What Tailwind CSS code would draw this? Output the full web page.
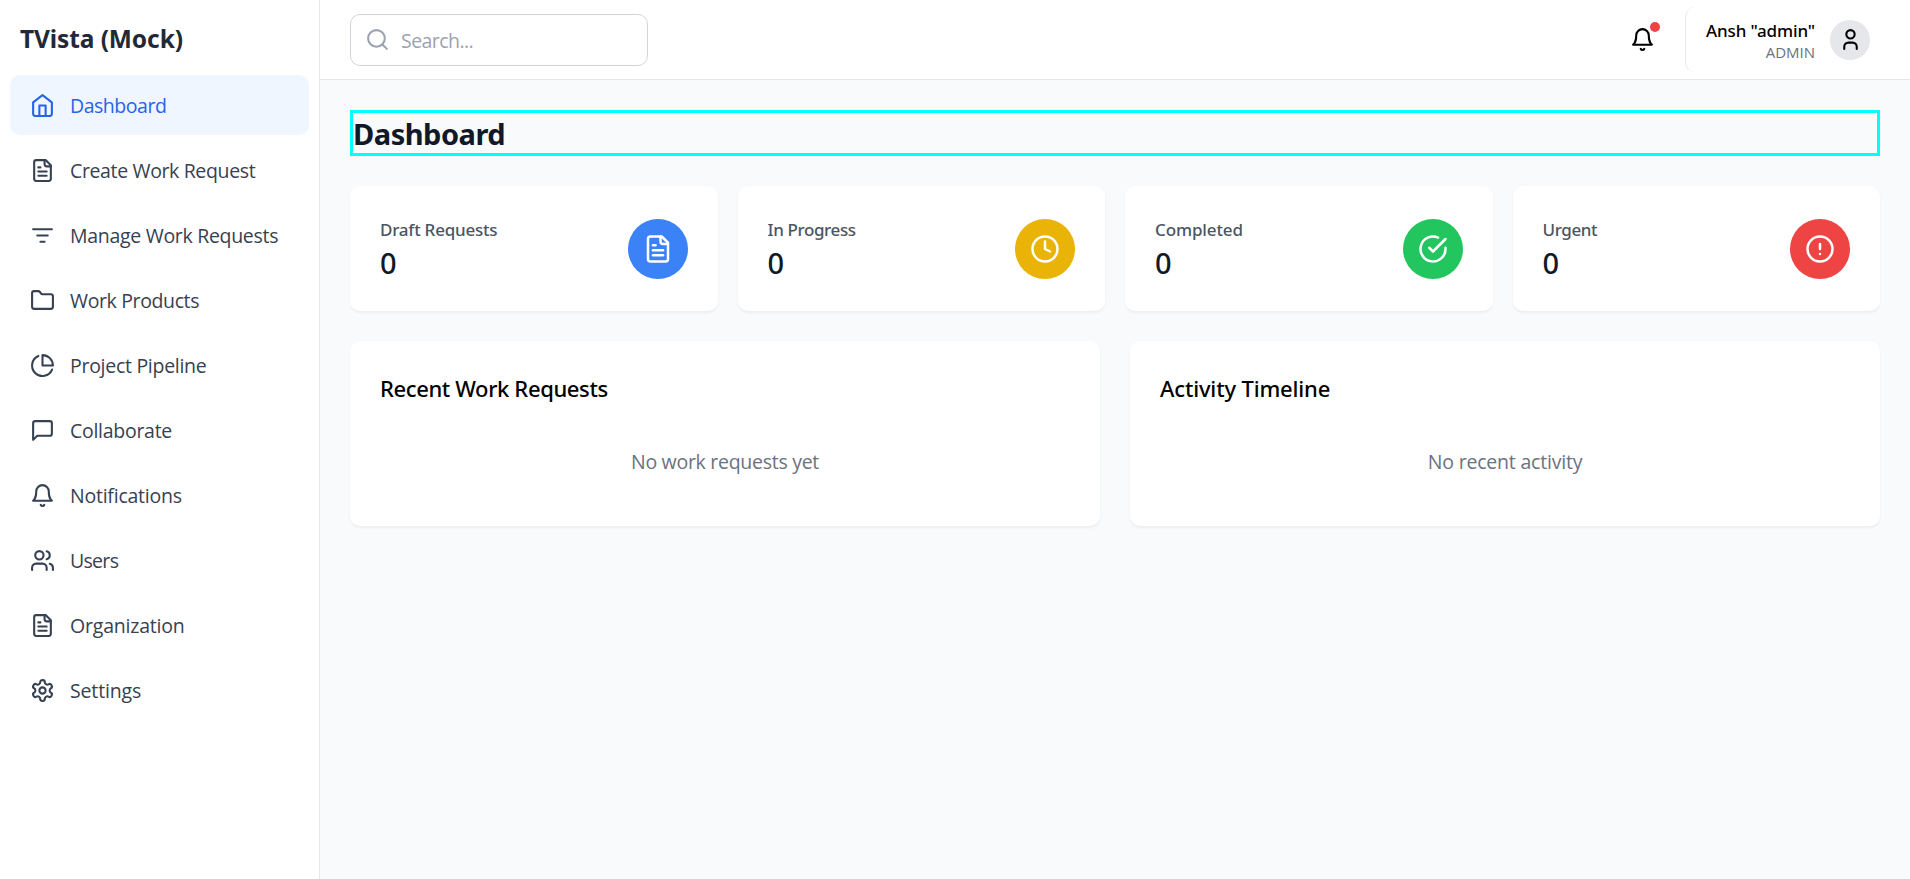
<!DOCTYPE html>
<html lang="en">
<head>
<meta charset="utf-8">
<title>TVista</title>
<script src="https://cdn.jsdelivr.net/npm/@tailwindcss/browser@4"></script>
</head>
<body class="flex h-screen overflow-hidden bg-[#f9fafb] font-['Open_Sans','Noto_Sans',sans-serif] text-black">
<svg class="hidden">
  <symbol id="file" viewBox="0 0 24 24"><path d="M15 2H6a2 2 0 0 0-2 2v16a2 2 0 0 0 2 2h12a2 2 0 0 0 2-2V7Z"/><path d="M14 2v4a2 2 0 0 0 2 2h4"/><path d="M10 9H8"/><path d="M16 13H8"/><path d="M16 17H8"/></symbol>
  <symbol id="bell" viewBox="0 0 24 24"><path d="M6 8a6 6 0 0 1 12 0c0 7 3 9 3 9H3s3-2 3-9"/><path d="M10.3 21a1.94 1.94 0 0 0 3.4 0"/></symbol>
</svg>

<aside class="flex w-[320px] shrink-0 flex-col border-r border-[#e5e7eb] bg-white">
  <div class="flex h-[75px] items-center px-5 pt-1 font-['Noto_Sans',sans-serif] text-[24.5px] font-bold tracking-[-0.1px] text-[#1f2937]">TVista (Mock)</div>
  <nav class="flex flex-col gap-[5px] px-2.5 text-[19.5px] leading-[30px] text-[#374151] [&_span]:pt-0.5 [&_svg]:size-[25px] [&_svg]:fill-none [&_svg]:stroke-current [&_svg]:stroke-2 [&_svg]:[stroke-linecap:round] [&_svg]:[stroke-linejoin:round] [&>a]:flex [&>a]:h-[60px] [&>a]:w-[299px] [&>a]:items-center [&>a]:gap-[15px] [&>a]:rounded-[10px] [&>a]:px-5">
    <a class="bg-[#eff6ff] text-[#2563eb]"><svg viewBox="0 0 24 24"><path d="m3 9 9-7 9 7v11a2 2 0 0 1-2 2H5a2 2 0 0 1-2-2z"/><polyline points="9 22 9 12 15 12 15 22"/></svg><span class="tracking-[-0.47px]">Dashboard</span></a>
    <a><svg><use href="#file"/></svg><span class="tracking-[-0.36px]">Create Work Request</span></a>
    <a><svg viewBox="0 0 24 24"><path d="M3 6h18"/><path d="M7 12h10"/><path d="M10 18h4"/></svg><span class="tracking-[-0.3px]">Manage Work Requests</span></a>
    <a><svg viewBox="0 0 24 24"><path d="M20 20a2 2 0 0 0 2-2V8a2 2 0 0 0-2-2h-7.9a2 2 0 0 1-1.69-.9L9.6 3.9A2 2 0 0 0 7.93 3H4a2 2 0 0 0-2 2v13a2 2 0 0 0 2 2Z"/></svg><span class="tracking-[-0.37px]">Work Products</span></a>
    <a><svg viewBox="0 0 24 24"><path d="M21.21 15.89A10 10 0 1 1 8 2.83"/><path d="M22 12A10 10 0 0 0 12 2v10z"/></svg><span class="tracking-[-0.28px]">Project Pipeline</span></a>
    <a><svg viewBox="0 0 24 24"><path d="M21 15a2 2 0 0 1-2 2H7l-4 4V5a2 2 0 0 1 2-2h14a2 2 0 0 1 2 2z"/></svg><span class="tracking-[-0.28px]">Collaborate</span></a>
    <a><svg><use href="#bell"/></svg><span class="tracking-[-0.23px]">Notifications</span></a>
    <a><svg viewBox="0 0 24 24"><path d="M16 21v-2a4 4 0 0 0-4-4H6a4 4 0 0 0-4 4v2"/><circle cx="9" cy="7" r="4"/><path d="M22 21v-2a4 4 0 0 0-3-3.87"/><path d="M16 3.13a4 4 0 0 1 0 7.75"/></svg><span class="tracking-[-0.7px]">Users</span></a>
    <a><svg><use href="#file"/></svg><span class="tracking-[-0.2px]">Organization</span></a>
    <a><svg viewBox="0 0 24 24"><path d="M12.22 2h-.44a2 2 0 0 0-2 2v.18a2 2 0 0 1-1 1.73l-.43.25a2 2 0 0 1-2 0l-.15-.08a2 2 0 0 0-2.73.73l-.22.38a2 2 0 0 0 .73 2.73l.15.1a2 2 0 0 1 1 1.72v.51a2 2 0 0 1-1 1.74l-.15.09a2 2 0 0 0-.73 2.73l.22.38a2 2 0 0 0 2.73.73l.15-.08a2 2 0 0 1 2 0l.43.25a2 2 0 0 1 1 1.73V20a2 2 0 0 0 2 2h.44a2 2 0 0 0 2-2v-.18a2 2 0 0 1 1-1.73l.43-.25a2 2 0 0 1 2 0l.15.08a2 2 0 0 0 2.73-.73l.22-.39a2 2 0 0 0-.73-2.73l-.15-.08a2 2 0 0 1-1-1.74v-.5a2 2 0 0 1 1-1.74l.15-.09a2 2 0 0 0 .73-2.73l-.22-.38a2 2 0 0 0-2.73-.73l-.15.08a2 2 0 0 1-2 0l-.43-.25a2 2 0 0 1-1-1.73V4a2 2 0 0 0-2-2z"/><circle cx="12" cy="12" r="3"/></svg><span class="tracking-[-0.15px]">Settings</span></a>
  </nav>
</aside>

<div class="flex min-w-0 flex-1 flex-col [&_svg]:fill-none [&_svg]:stroke-current [&_svg]:stroke-2 [&_svg]:[stroke-linecap:round] [&_svg]:[stroke-linejoin:round]">
  <header class="flex h-20 shrink-0 items-center justify-between border-b border-[#e5e7eb] bg-white px-[30px]">
    <div class="flex h-[52px] w-[298px] items-center gap-[11px] rounded-[10px] border border-[#d1d5db] px-[14px] text-[#9ca3af]">
      <svg class="size-[25px]" viewBox="0 0 24 24"><circle cx="11" cy="11" r="8"/><path d="m21 21-4.3-4.3"/></svg>
      <span class="pt-0.5 text-[19.5px] tracking-[-0.55px]">Search...</span>
    </div>
    <div class="flex items-center gap-[30px]">
      <div class="relative">
        <svg class="size-[25px]"><use href="#bell"/></svg>
        <span class="absolute -top-[5px] -right-[5px] size-2.5 rounded-full bg-[#ef4444]"></span>
      </div>
      <div class="flex h-[65px] items-center gap-[15px] rounded-[10px] border-l border-[#e5e7eb] pr-2.5 pl-5">
        <div class="text-right">
          <div class="pt-px font-['Noto_Sans',sans-serif] text-[17px] leading-[25px] font-medium tracking-[-0.13px]">Ansh "admin"</div>
          <div class="text-[15px] leading-[19px] tracking-normal text-[#6b7280]">ADMIN</div>
        </div>
        <div class="flex size-10 items-center justify-center rounded-full bg-[#e5e7eb]">
          <svg class="size-[25px]" viewBox="0 0 24 24"><path d="M18 21v-2a4 4 0 0 0-4-4h-4a4 4 0 0 0-4 4v2"/><circle cx="12" cy="7" r="4"/></svg>
        </div>
      </div>
    </div>
  </header>

  <main class="flex flex-col gap-[30px] p-[30px] font-['Noto_Sans',sans-serif]">
    <h1 class="h-[46px] border-3 border-[#00ffff] text-[29px] leading-[42px] font-bold tracking-[-0.48px] text-[#111827]">Dashboard</h1>

    <section class="grid grid-cols-4 gap-5 [&>div]:flex [&>div]:h-[125px] [&>div]:items-center [&>div]:justify-between [&>div]:rounded-[10px] [&>div]:bg-white [&>div]:px-[30px] [&>div]:shadow-[0_1.25px_2.5px_rgba(0,0,0,0.05)] [&_svg]:size-[30px]">
      <div>
        <div class="pt-[3px]"><p class="text-[17px] leading-[25px] font-medium tracking-[-0.23px] text-[#4b5563]">Draft Requests</p><p class="text-[29px] leading-[41px] font-medium text-[#111827]">0</p></div>
        <div class="flex size-[60px] items-center justify-center rounded-full bg-[#3b82f6] text-white"><svg><use href="#file"/></svg></div>
      </div>
      <div>
        <div class="pt-[3px]"><p class="text-[17px] leading-[25px] font-medium tracking-[-0.38px] text-[#4b5563]">In Progress</p><p class="text-[29px] leading-[41px] font-medium text-[#111827]">0</p></div>
        <div class="flex size-[60px] items-center justify-center rounded-full bg-[#eab308] text-white"><svg viewBox="0 0 24 24"><circle cx="12" cy="12" r="10"/><polyline points="12 6 12 12 16 14"/></svg></div>
      </div>
      <div>
        <div class="pt-[3px]"><p class="text-[17px] leading-[25px] font-medium tracking-[-0.12px] text-[#4b5563]">Completed</p><p class="text-[29px] leading-[41px] font-medium text-[#111827]">0</p></div>
        <div class="flex size-[60px] items-center justify-center rounded-full bg-[#22c55e] text-white"><svg viewBox="0 0 24 24"><path d="M22 11.08V12a10 10 0 1 1-5.93-9.14"/><path d="m9 11 3 3L22 4"/></svg></div>
      </div>
      <div>
        <div class="pt-[3px]"><p class="text-[17px] leading-[25px] font-medium tracking-[-0.4px] text-[#4b5563]">Urgent</p><p class="text-[29px] leading-[41px] font-medium text-[#111827]">0</p></div>
        <div class="flex size-[60px] items-center justify-center rounded-full bg-[#ef4444] text-white"><svg viewBox="0 0 24 24"><circle cx="12" cy="12" r="10"/><path d="M12 8v4"/><path d="M12 16h.01"/></svg></div>
      </div>
    </section>

    <section class="grid grid-cols-2 gap-[30px] [&>div]:h-[185px] [&>div]:rounded-[10px] [&>div]:bg-white [&>div]:p-[30px] [&>div]:shadow-[0_1.25px_2.5px_rgba(0,0,0,0.05)]">
      <div>
        <h2 class="text-[22px] leading-[35px] font-medium tracking-[-0.38px]">Recent Work Requests</h2>
        <p class="mt-[41px] text-center font-['Open_Sans',sans-serif] text-[19.5px] leading-[30px] tracking-[-0.28px] text-[#6b7280]">No work requests yet</p>
      </div>
      <div>
        <h2 class="text-[22px] leading-[35px] font-medium tracking-[-0.16px]">Activity Timeline</h2>
        <p class="mt-[41px] text-center font-['Open_Sans',sans-serif] text-[19.5px] leading-[30px] tracking-[-0.2px] text-[#6b7280]">No recent activity</p>
      </div>
    </section>
  </main>
</div>
</body>
</html>
